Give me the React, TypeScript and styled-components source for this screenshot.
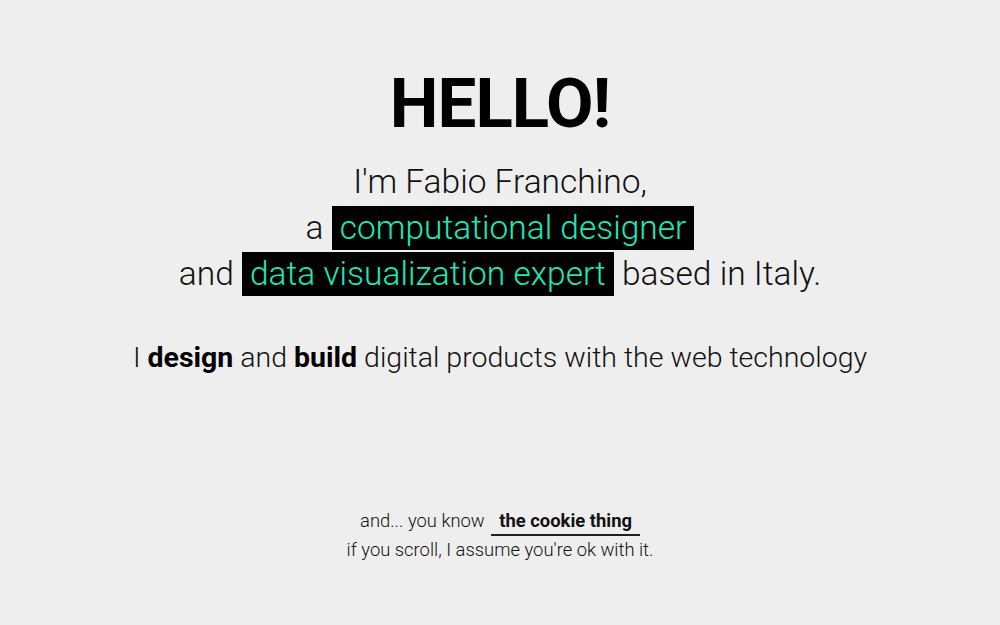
import React from "react";
import styled, { createGlobalStyle } from "styled-components";

const Global = createGlobalStyle`
  html, body { margin: 0; padding: 0; background: #eeeeee; }
  body { font-family: Roboto, "Noto Sans", sans-serif; color: #111; }
`;

const Page = styled.main`
  height: 625px;
  display: flex;
  flex-direction: column;
  align-items: center;
  text-align: center;
  padding-top: 61px;
  box-sizing: border-box;
`;

const Title = styled.h1`
  margin: 0;
  font-size: 69px;
  font-weight: 700;
  letter-spacing: -1px;
  line-height: 86px;
  color: #000;
`;

const Intro = styled.p`
  margin: 12px 0 0;
  font-size: 33.5px;
  font-weight: 300;
  line-height: 46px;
  color: #111;
`;

const Highlight = styled.span`
  display: inline-block;
  background: #000;
  color: #1de9b6;
  padding: 0 8px;
  line-height: 44px;
`;

const Tagline = styled.p`
  margin: 43px 0 0;
  font-size: 28.5px;
  font-weight: 300;
  line-height: 36px;
  color: #111;
  b { font-weight: 700; color: #000; }
`;

const Cookie = styled.div`
  margin-top: auto;
  margin-bottom: 61px;
  font-size: 18.4px;
  font-weight: 300;
  line-height: 28px;
  color: #111;
`;

const CookieLink = styled.a`
  display: inline-block;
  font-weight: 700;
  color: #111;
  text-decoration: none;
  padding: 0 8px;
  margin-left: 2px;
  border-bottom: 2px solid #222;
  line-height: 26px;
`;

export default function App() {
  return (
    <>
      <Global />
      <Page>
        <Title>HELLO!</Title>
        <Intro>
          I'm Fabio Franchino,
          <br />a <Highlight>computational designer</Highlight>
          <br />and <Highlight>data visualization expert</Highlight> based in Italy.
        </Intro>
        <Tagline>
          I <b>design</b> and <b>build</b> digital products with the web technology
        </Tagline>
        <Cookie>
          and... you know <CookieLink href="#">the cookie thing</CookieLink>
          <br />
          if you scroll, I assume you're ok with it.
        </Cookie>
      </Page>
    </>
  );
}
